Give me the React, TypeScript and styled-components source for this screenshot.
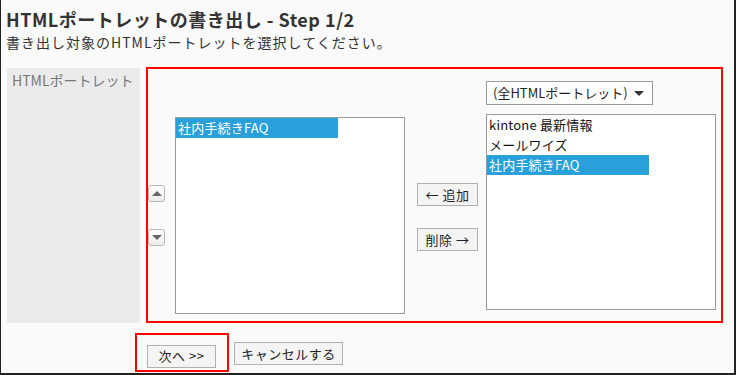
import React from 'react';
import styled, { createGlobalStyle } from 'styled-components';

const GlobalStyle = createGlobalStyle`
  html, body {
    margin: 0;
    padding: 0;
    background: #fafafa;
  }
  body {
    font-family: "Noto Sans CJK JP", "Noto Sans", sans-serif;
    color: #333;
  }
`;

const Frame = styled.div`
  width: 736px;
  height: 375px;
  box-sizing: border-box;
  background: #fafafa;
  border-left: 1px solid #222;
  border-right: 2px solid #222;
  border-bottom: 2px solid #222;
  padding: 6px 0 0 5px;
  overflow: hidden;
`;

const Title = styled.h1`
  margin: 0;
  font-size: 18px;
  line-height: 26px;
  font-weight: bold;
  letter-spacing: 0.5px;
  color: #333;
  white-space: nowrap;
`;

const Lead = styled.p`
  margin: 0;
  font-size: 14px;
  line-height: 20px;
  letter-spacing: 1px;
  color: #333;
  white-space: nowrap;
`;

const FormRow = styled.div`
  display: flex;
  margin: 16px 0 0 1px;
  gap: 6px;
  height: 255px;
`;

const LabelCell = styled.div`
  width: 133px;
  box-sizing: border-box;
  background: #ebebeb;
  color: #777;
  font-size: 14px;
  line-height: 20px;
  padding: 2px 0 0 5px;
  white-space: nowrap;
`;

const Highlight = styled.div`
  border: 2px solid #f00;
  box-sizing: border-box;
`;

const PickerBox = styled(Highlight)`
  width: 577px;
  height: 256px;
  margin-top: -1px;
  display: flex;
  align-items: flex-start;
`;

const ArrowColumn = styled.div`
  width: 16px;
  padding-top: 116px;
  display: flex;
  flex-direction: column;
  gap: 27px;
`;

const ArrowButton = styled.button`
  width: 17px;
  height: 17px;
  padding: 0;
  border: 1px solid #b8b8b8;
  border-radius: 3px;
  background: linear-gradient(#ffffff, #ececec);
  display: flex;
  align-items: center;
  justify-content: center;
`;

const Triangle = styled.span<{ $down?: boolean }>`
  width: 0;
  height: 0;
  border-left: 5px solid transparent;
  border-right: 5px solid transparent;
  ${(p) => (p.$down ? 'border-top: 5px solid #666;' : 'border-bottom: 5px solid #666;')}
`;

const ListBox = styled.div<{ $top: number; $height: number; $left: number }>`
  width: 230px;
  height: ${(p) => p.$height}px;
  margin-top: ${(p) => p.$top}px;
  margin-left: ${(p) => p.$left}px;
  box-sizing: border-box;
  border: 1px solid #9a9a9a;
  background: #fff;
`;

const ListItem = styled.div<{ $selected?: boolean }>`
  width: 162px;
  height: 20px;
  line-height: 20px;
  padding-left: 2px;
  box-sizing: border-box;
  font-size: 13px;
  letter-spacing: 0.2px;
  white-space: nowrap;
  color: ${(p) => (p.$selected ? '#fff' : '#111')};
  background: ${(p) => (p.$selected ? '#29a0da' : 'transparent')};
`;

const MoveColumn = styled.div`
  margin: 114px 0 0 12px;
  width: 61px;
  display: flex;
  flex-direction: column;
  gap: 22px;
`;

const Button = styled.button<{ $width?: number }>`
  width: ${(p) => (p.$width ? `${p.$width}px` : 'auto')};
  height: 23px;
  box-sizing: border-box;
  border: 1px solid #b0b0b0;
  background: #f4f4f4;
  font-family: "Noto Sans CJK JP", "Noto Sans", sans-serif;
  font-size: 13px;
  line-height: 20px;
  letter-spacing: 0.5px;
  color: #222;
  padding: 0;
  white-space: nowrap;
`;

const RightColumn = styled.div`
  margin-left: 8px;
  padding-top: 12px;
  display: flex;
  flex-direction: column;
  gap: 9px;
`;

const Select = styled.div`
  width: 167px;
  height: 24px;
  box-sizing: border-box;
  border: 1px solid #999;
  background: #fff;
  font-size: 13px;
  line-height: 22px;
  padding-left: 6px;
  color: #222;
  display: flex;
  align-items: center;
  gap: 6px;
  white-space: nowrap;
`;

const SelectArrow = styled.span`
  width: 0;
  height: 0;
  border-left: 5px solid transparent;
  border-right: 5px solid transparent;
  border-top: 5px solid #333;
`;

const Footer = styled.div`
  display: flex;
  align-items: flex-start;
  margin: 10px 0 0 129px;
  gap: 5px;
`;

const NextHighlight = styled(Highlight)`
  padding: 7px 11px 2px 10px;
`;

const FooterButton = styled(Button)`
  margin-top: 9px;
`;

export default function App() {
  return (
    <>
      <GlobalStyle />
      <Frame>
        <Title>HTMLポートレットの書き出し - Step 1/2</Title>
        <Lead>書き出し対象のHTMLポートレットを選択してください。</Lead>

        <FormRow>
          <LabelCell>HTMLポートレット</LabelCell>
          <PickerBox>
            <ArrowColumn>
              <ArrowButton aria-label='上へ'>
                <Triangle />
              </ArrowButton>
              <ArrowButton aria-label='下へ'>
                <Triangle $down />
              </ArrowButton>
            </ArrowColumn>

            {/* 選択済み */}
            <ListBox $top={48} $height={197} $left={11}>
              <ListItem $selected>社内手続きFAQ</ListItem>
            </ListBox>

            <MoveColumn>
              <Button $width={61}>← 追加</Button>
              <Button $width={61}>削除 →</Button>
            </MoveColumn>

            {/* 候補 */}
            <RightColumn>
              <Select>
                (全HTMLポートレット)
                <SelectArrow />
              </Select>
              <ListBox $top={0} $height={196} $left={0}>
                <ListItem>kintone 最新情報</ListItem>
                <ListItem>メールワイズ</ListItem>
                <ListItem $selected>社内手続きFAQ</ListItem>
              </ListBox>
            </RightColumn>
          </PickerBox>
        </FormRow>

        <Footer>
          <NextHighlight>
            <Button $width={69}>次へ &gt;&gt;</Button>
          </NextHighlight>
          <FooterButton $width={109}>キャンセルする</FooterButton>
        </Footer>
      </Frame>
    </>
  );
}
